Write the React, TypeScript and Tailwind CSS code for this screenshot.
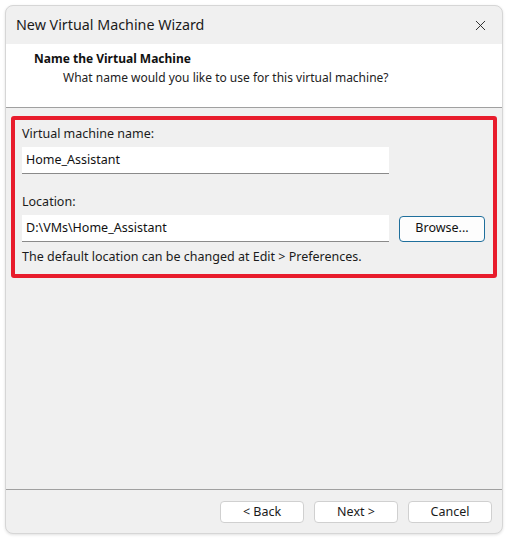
import { X } from "lucide-react";

function WizardButton({ label }: { label: string }) {
  return (
    <button className="w-[84px] h-[22px] bg-white border border-[#d0d0d0] rounded-[4px] text-[12.5px] text-[#1a1a1a] leading-none">
      {label}
    </button>
  );
}

function TextBox({ value }: { value: string }) {
  return (
    <div className="w-[367px] h-[27px] bg-white border-b border-[#8a8a8a] flex items-center px-[4px] text-[12.5px] text-[#111]">
      {value}
    </div>
  );
}

export default function App() {
  return (
    <div
      className="w-[509px] h-[538px] bg-white p-[5px] pb-[4px]"
      style={{ fontFamily: '"Noto Sans", "Open Sans", sans-serif' }}
    >
      <div className="w-[498px] h-[529px] flex flex-col bg-[#f0f0f0] border border-[#d6d6d6] rounded-[8px] shadow-[0_1px_3px_rgba(0,0,0,0.12)] overflow-hidden">
        {/* title bar */}
        <div className="h-[38px] flex items-center justify-between pl-[10px] pr-[13px] shrink-0">
          <span className="text-[14.3px] text-[#1b1b1b]">New Virtual Machine Wizard</span>
          <X size={17} strokeWidth={1.3} className="text-[#222]" />
        </div>

        {/* header */}
        <div className="h-[64px] bg-white border-b border-[#a0a0a0] pl-[28px] pt-[6px] shrink-0">
          <div className="text-[12px] font-bold text-[#111] leading-[18px]">Name the Virtual Machine</div>
          <div className="text-[12px] text-[#222] leading-[18px] pl-[29px] mt-[1px]">
            What name would you like to use for this virtual machine?
          </div>
        </div>

        {/* body */}
        <div className="flex-1 px-[5px] pt-[8px]">
          <div className="w-[486px] h-[162px] border-[4px] border-[#e81c2c] rounded-[3px] pl-[7px] pt-[5px]">
            <div className="text-[12.5px] text-[#1b1b1b] leading-[18px]">Virtual machine name:</div>
            <div className="mt-[4px]">
              <TextBox value="Home_Assistant" />
            </div>
            <div className="text-[12.5px] text-[#1b1b1b] leading-[18px] mt-[19px]">Location:</div>
            <div className="mt-[4px] flex items-center gap-[10px]">
              <TextBox value="D:\VMs\Home_Assistant" />
              <button className="w-[86px] h-[26px] bg-[#fdfdfd] border border-[#1f6f9c] rounded-[4px] text-[12.5px] text-[#111]">
                Browse...
              </button>
            </div>
            <div className="text-[12.5px] text-[#1b1b1b] leading-[18px] mt-[6px]">
              The default location can be changed at Edit &gt; Preferences.
            </div>
          </div>
        </div>

        {/* footer */}
        <div className="h-[44px] border-t border-[#a0a0a0] flex items-start justify-end gap-[10px] pr-[10px] pt-[11px] shrink-0">
          <WizardButton label="< Back" />
          <WizardButton label="Next >" />
          <WizardButton label="Cancel" />
        </div>
      </div>
    </div>
  );
}
